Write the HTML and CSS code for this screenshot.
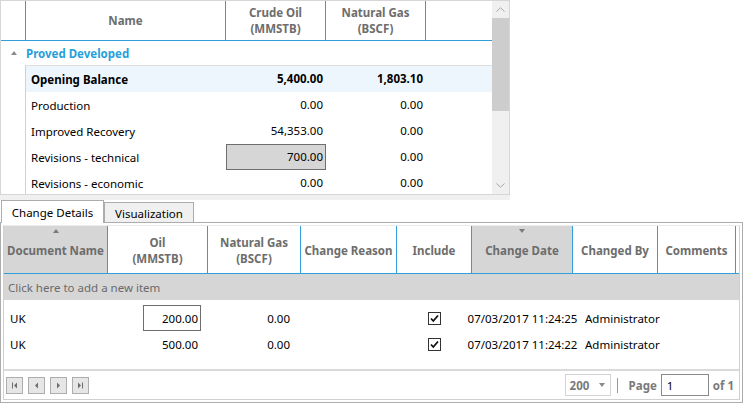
FILE: index.html
```html
<!DOCTYPE html>
<html>
<head>
<meta charset="utf-8">
<link rel="stylesheet" href="styles.css">
</head>
<body>
<div class="top-grid">
  <div class="tg-main">
    <div class="tg-head">
      <div class="c-ind"></div>
      <div class="c-name">Name</div>
      <div class="c-num">Crude Oil<br>(MMSTB)</div>
      <div class="c-num">Natural Gas<br>(BSCF)</div>
      <div class="c-rest"></div>
    </div>
    <div class="tg-group">
      <div class="c-ind"><span class="tri-up"></span></div>
      <span>Proved Developed</span>
    </div>
    <div class="tg-body">
      <div class="tg-ind"></div>
      <div class="tg-rows">
        <div class="tg-row bold sel"><div class="c-name">Opening Balance</div><div class="c-num">5,400.00</div><div class="c-num">1,803.10</div></div>
        <div class="tg-row"><div class="c-name">Production</div><div class="c-num">0.00</div><div class="c-num">0.00</div></div>
        <div class="tg-row"><div class="c-name">Improved Recovery</div><div class="c-num">54,353.00</div><div class="c-num">0.00</div></div>
        <div class="tg-row"><div class="c-name">Revisions - technical</div><div class="c-num"><div class="edit-cell">700.00</div></div><div class="c-num">0.00</div></div>
        <div class="tg-row"><div class="c-name">Revisions - economic</div><div class="c-num">0.00</div><div class="c-num">0.00</div></div>
      </div>
    </div>
  </div>
  <div class="vscroll">
    <div class="sb-btn"><svg width="9" height="5" viewBox="0 0 9 5"><path d="M0.5 4.5 L4.5 0.8 L8.5 4.5" fill="none" stroke="#a6a6a6" stroke-width="1"/></svg></div>
    <div class="sb-track"><div class="sb-thumb"></div></div>
    <div class="sb-btn"><svg width="9" height="5" viewBox="0 0 9 5"><path d="M0.5 0.5 L4.5 4.2 L8.5 0.5" fill="none" stroke="#a6a6a6" stroke-width="1"/></svg></div>
  </div>
</div>
<div class="gap"></div>
<div class="tabs">
  <div class="tab active">Change Details</div>
  <div class="tab">Visualization</div>
</div>
<div class="panel">
  <div class="bgrid">
    <div class="bg-head">
      <div class="h-doc sorted"><span class="sort-up"></span>Document Name</div>
      <div class="h-oil">Oil<br>(MMSTB)</div>
      <div class="h-gas">Natural Gas<br>(BSCF)</div>
      <div class="h-reason">Change Reason</div>
      <div class="h-inc">Include</div>
      <div class="h-date sorted"><span class="sort-down"></span>Change Date</div>
      <div class="h-by">Changed By</div>
      <div class="h-com">Comments</div>
      <div class="h-rest"></div>
    </div>
    <div class="new-item">Click here to add a new item</div>
    <div class="bg-data">
      <div class="bg-row">
        <div class="h-doc d-doc">UK</div>
        <div class="h-oil d-num"><div class="edit-box">200.00</div></div>
        <div class="h-gas d-num">0.00</div>
        <div class="h-reason"></div>
        <div class="h-inc d-inc"><svg class="chk" width="13" height="13" viewBox="0 0 13 13"><rect x="0.5" y="0.5" width="12" height="12" fill="#fff" stroke="#333"/><path d="M3 6.5 L5.3 9 L10 3.5" fill="none" stroke="#111" stroke-width="1.8"/></svg></div>
        <div class="h-date d-date">07/03/2017 11:24:25</div>
        <div class="h-by d-by">Administrator</div>
        <div class="h-com"></div>
      </div>
      <div class="bg-row">
        <div class="h-doc d-doc">UK</div>
        <div class="h-oil d-num"><span class="num-pad">500.00</span></div>
        <div class="h-gas d-num">0.00</div>
        <div class="h-reason"></div>
        <div class="h-inc d-inc"><svg class="chk" width="13" height="13" viewBox="0 0 13 13"><rect x="0.5" y="0.5" width="12" height="12" fill="#fff" stroke="#333"/><path d="M3 6.5 L5.3 9 L10 3.5" fill="none" stroke="#111" stroke-width="1.8"/></svg></div>
        <div class="h-date d-date">07/03/2017 11:24:22</div>
        <div class="h-by d-by">Administrator</div>
        <div class="h-com"></div>
      </div>
    </div>
    <div class="pager">
      <div class="pg-btn"><svg width="7" height="7" viewBox="0 0 7 7"><rect x="1" y="0.5" width="1" height="6" fill="#6e6e6e"/><path d="M6 0.5 L3 3.5 L6 6.5 Z" fill="#6e6e6e"/></svg></div>
      <div class="pg-btn"><svg width="7" height="7" viewBox="0 0 7 7"><path d="M5 0.5 L2 3.5 L5 6.5 Z" fill="#6e6e6e"/></svg></div>
      <div class="pg-btn"><svg width="7" height="7" viewBox="0 0 7 7"><path d="M2 0.5 L5 3.5 L2 6.5 Z" fill="#6e6e6e"/></svg></div>
      <div class="pg-btn"><svg width="7" height="7" viewBox="0 0 7 7"><path d="M1 0.5 L4 3.5 L1 6.5 Z" fill="#6e6e6e"/><rect x="5" y="0.5" width="1" height="6" fill="#6e6e6e"/></svg></div>
      <div class="pg-right">
        <div class="pg-size"><span>200</span><span class="dd-arrow"></span></div>
        <div class="pg-sep"></div>
        <span class="pg-label">Page</span>
        <div class="pg-input">1</div>
        <span class="pg-label">of 1</span>
      </div>
    </div>
  </div>
</div>
</body>
</html>
```
FILE: styles.css
```css
* { box-sizing: border-box; }
html, body { margin: 0; padding: 0; background: #fff; }
body {
  font-family: "Noto Sans", "Open Sans", sans-serif;
  font-size: 11.5px;
  color: #000;
  width: 744px;
  height: 403px;
  overflow: hidden;
}

/* ---------- top grid ---------- */
.top-grid {
  width: 510px;
  height: 195px;
  border: 1px solid #d6d6d6;
  display: flex;
}
.tg-main { flex: 1; display: flex; flex-direction: column; min-width: 0; }
.tg-head {
  display: flex;
  height: 40px;
  flex: none;
  border-bottom: 1px solid #2f9ed9;
}
.tg-head > div {
  border-right: 1px solid #2f9ed9;
  display: flex;
  align-items: center;
  justify-content: center;
  text-align: center;
  font-weight: bold;
  color: #6d6d6d;
  line-height: 16px;
}
.tg-head > .c-rest { border-right: none; }
.c-ind { width: 25px; flex: none; }
.c-name { width: 200px; flex: none; }
.c-num { width: 100px; flex: none; }
.c-rest { flex: 1; }

.tg-group {
  height: 24px;
  flex: none;
  display: flex;
  align-items: center;
  color: #26a0da;
  font-weight: bold;
}
.tg-group .c-ind { display: flex; justify-content: center; align-items: center; padding-left: 1px; }
.tri-up {
  width: 0; height: 0;
  border-left: 3px solid transparent;
  border-right: 3px solid transparent;
  border-bottom: 4px solid #8a8a8a;
  margin-top: -1px;
}
.tg-body { display: flex; flex: 1; min-height: 0; }
.tg-ind { width: 25px; flex: none; border-right: 1px solid #d2d2d2; }
.tg-rows { flex: 1; border-top: 1px solid #dedede; }
.tg-row { display: flex; height: 26px; align-items: center; }
.tg-row.sel { background: #eef6fd; }
.tg-row.bold { font-weight: bold; }
.tg-row .c-name { padding-left: 5px; }
.tg-row .c-num { text-align: right; padding-right: 3px; height: 26px; line-height: 26px; }
.edit-cell {
  margin-right: -3px;
  height: 26px;
  line-height: 24px;
  background: #d6d6d6;
  border: 1px solid #6e6e6e;
  padding-right: 2px;
}

.vscroll {
  width: 17px;
  flex: none;
  background: #f0f0f0;
  display: flex;
  flex-direction: column;
}
.sb-btn { height: 17px; flex: none; display: flex; align-items: center; justify-content: center; }
.sb-track { flex: 1; }
.sb-thumb { height: 93px; background: #cdcdcd; }

.gap { width: 510px; height: 5px; background: #f0f0f0; }

/* ---------- tabs ---------- */
.tabs {
  display: flex;
  align-items: flex-end;
  height: 22px;
  padding-left: 1px;
}
.tab {
  width: 90px;
  height: 20px;
  border: 1px solid #acacac;
  border-bottom: none;
  background: #f0f0f0;
  display: flex;
  justify-content: center;
  align-items: center;
  padding-top: 2px;
  color: #000;
}
.tab.active {
  width: 103px;
  height: 23px;
  margin-bottom: -1px;
  background: #fff;
  padding-top: 0;
  position: relative;
  z-index: 1;
}

.panel {
  width: 743px;
  height: 181px;
  border: 1px solid #acacac;
  padding: 2px;
}
.bgrid {
  height: 100%;
  border: 1px solid #d0d0d0;
  border-top-color: #ececec;
  display: flex;
  flex-direction: column;
}
.bg-head {
  display: flex;
  height: 48px;
  flex: none;
  border-bottom: 1px solid #2f9ed9;
}
.bg-head > div {
  position: relative;
  border-right: 1px solid #2f9ed9;
  display: flex;
  align-items: center;
  justify-content: center;
  text-align: center;
  font-weight: bold;
  color: #6d6d6d;
  line-height: 16px;
  padding-top: 3px;
}
.bg-head > .sorted { background: #d6d6d6; }
.bg-head > .h-rest { border-right: none; }
.h-doc { width: 104px; flex: none; }
.h-oil { width: 100px; flex: none; }
.h-gas { width: 93px; flex: none; }
.h-reason { width: 96px; flex: none; }
.h-inc { width: 75px; flex: none; }
.h-date { width: 101px; flex: none; }
.h-by { width: 85px; flex: none; }
.h-com { width: 78px; flex: none; }
.h-rest { flex: 1; }
.sort-up, .sort-down {
  position: absolute;
  left: 50%;
  top: 3px;
  margin-left: -3px;
  width: 0; height: 0;
  border-left: 3px solid transparent;
  border-right: 3px solid transparent;
}
.sort-up { border-bottom: 4px solid #7a7a7a; }
.sort-down { border-top: 4px solid #7a7a7a; }

.new-item {
  height: 26px;
  flex: none;
  background: #d6d6d6;
  color: #6a6a6a;
  display: flex;
  align-items: center;
  padding-left: 4px;
}
.bg-data { flex: 1; padding-top: 5px; }
.bg-row { display: flex; height: 26px; align-items: center; }
.bg-row > div { height: 26px; display: flex; align-items: center; }
.d-doc { padding-left: 6px; }
.d-num { justify-content: flex-end; }
.h-oil.d-num { padding-right: 7px; }
.num-pad { padding-right: 3px; }
.h-gas.d-num { padding-right: 11px; }
.edit-box {
  width: 58px;
  height: 26px;
  border: 1px solid #6e6e6e;
  background: #fff;
  display: flex;
  align-items: center;
  justify-content: flex-end;
  padding-right: 2px;
}
.d-inc { justify-content: center; }
.d-date { justify-content: center; white-space: nowrap; overflow: visible; }
.d-by { padding-left: 12px; white-space: nowrap; }

.pager {
  height: 30px;
  flex: none;
  border-top: 2px solid #dadada;
  display: flex;
  align-items: center;
  padding: 0 5px 0 2px;
  gap: 5px;
}
.pg-btn {
  width: 17px;
  height: 17px;
  border: 1px solid #adadad;
  background: #e6e6e6;
  display: flex;
  align-items: center;
  justify-content: center;
}
.pg-right {
  margin-left: auto;
  display: flex;
  align-items: center;
}
.pg-size {
  width: 46px;
  height: 22px;
  border: 1px solid #d4d4d4;
  display: flex;
  align-items: center;
  justify-content: space-between;
  padding: 0 5px 0 4px;
  color: #7a7a7a;
  font-weight: bold;
}
.dd-arrow {
  width: 0; height: 0;
  border-left: 3px solid transparent;
  border-right: 3px solid transparent;
  border-top: 4px solid #8a8a8a;
}
.pg-sep { width: 1px; height: 15px; background: #9a9a9a; margin: 0 11px 0 6px; }
.pg-label { color: #7a7a7a; font-weight: bold; }
.pg-input {
  width: 48px;
  height: 22px;
  border: 1px solid #8a8a8a;
  margin: 0 4px;
  padding-left: 5px;
  display: flex;
  align-items: center;
}
```
